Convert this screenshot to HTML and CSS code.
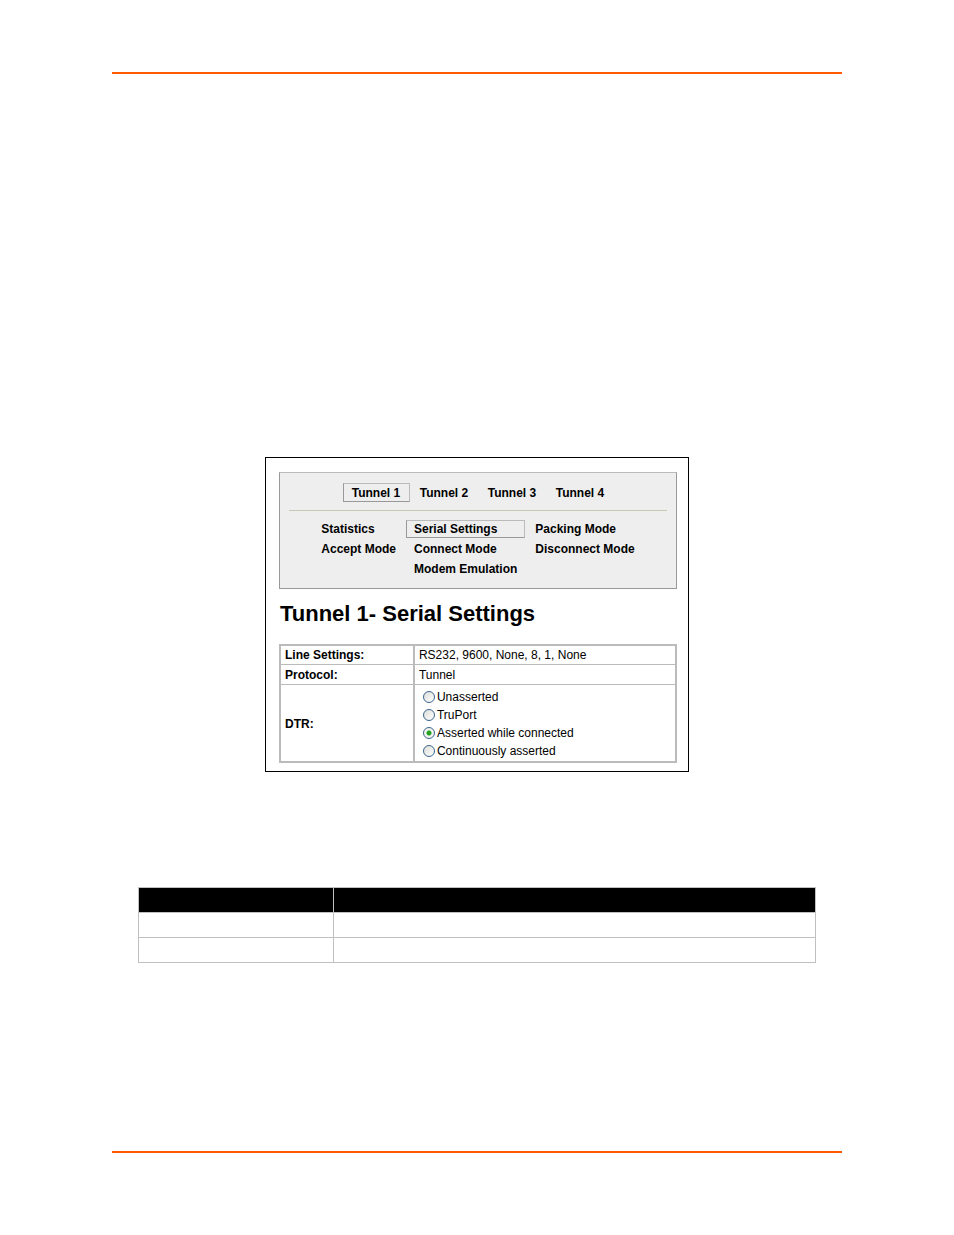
FILE: index.html
```html
<!DOCTYPE html>
<html lang="en">
<head>
<meta charset="utf-8">
<title>Tunnel 1 - Serial Settings</title>
<link rel="stylesheet" href="styles.css">
</head>
<body>
<div class="page">
  <main class="content">
    <section class="figure">
      <nav class="panel">
        <div class="tabs">
          <a class="item selected" href="#t1">Tunnel 1</a>
          <a class="item" href="#t2">Tunnel 2</a>
          <a class="item" href="#t3">Tunnel 3</a>
          <a class="item" href="#t4">Tunnel 4</a>
        </div>
        <div class="sections">
          <a class="item" href="#statistics">Statistics</a>
          <a class="item selected" href="#serial">Serial Settings</a>
          <a class="item" href="#packing">Packing Mode</a>
          <a class="item" href="#accept">Accept Mode</a>
          <a class="item" href="#connect">Connect Mode</a>
          <a class="item" href="#disconnect">Disconnect Mode</a>
          <a class="item middle" href="#modem">Modem Emulation</a>
        </div>
      </nav>
      <h1 class="title">Tunnel 1- Serial Settings</h1>
      <table class="settings">
        <tr><th scope="row">Line Settings:</th><td>RS232, 9600, None, 8, 1, None</td></tr>
        <tr><th scope="row">Protocol:</th><td>Tunnel</td></tr>
        <tr>
          <th scope="row">DTR:</th>
          <td class="choices">
            <label class="choice"><input type="radio" name="dtr">Unasserted</label>
            <label class="choice"><input type="radio" name="dtr">TruPort</label>
            <label class="choice"><input type="radio" name="dtr" checked>Asserted while connected</label>
            <label class="choice"><input type="radio" name="dtr">Continuously asserted</label>
          </td>
        </tr>
      </table>
    </section>
    <table class="summary">
      <thead><tr><th class="key"></th><th></th></tr></thead>
      <tbody>
        <tr><td></td><td></td></tr>
        <tr><td></td><td></td></tr>
      </tbody>
    </table>
  </main>
</div>
</body>
</html>
```
FILE: styles.css
```css
* { box-sizing: border-box; }

body {
  margin: 0;
  background: #fff;
  color: #000;
  font: 12px/16px "Liberation Sans", Arial, sans-serif;
}

.page {
  display: flex;
  min-height: 100vh;
  padding: 72px 112px 82px;
}

.content {
  flex: 1;
  padding: 383px 26px 112px;
  border-top: 2px solid #ff5a00;
  border-bottom: 2px solid #ff5a00;
}

.figure {
  max-width: 424px;
  margin: 0 auto;
  padding: 14px 11px 8px 13px;
  border: 1px solid #000;
}

.panel {
  padding: 10px 9px;
  border: 1px solid;
  border-color: #bbb #999 #999;
  background: #eee;
}

.tabs {
  display: flex;
  justify-content: center;
  gap: 1px;
  padding-bottom: 8px;
  border-bottom: 1px solid #c8c8b4;
}

.sections {
  display: grid;
  grid-template-columns: auto auto auto;
  justify-content: center;
  gap: 2px;
  padding-top: 9px;
}

.item {
  padding: 0 7px;
  border: 1px solid transparent;
  color: #000;
  font-weight: bold;
  text-decoration: none;
}

.tabs .item {
  min-width: 67px;
  padding-top: 1px;
  text-align: center;
}

.selected { border-color: #bbb #bbb #999 #999; }

.middle { grid-column: 2; }

.title {
  margin: 12px 0 18px;
  padding-left: 1px;
  font-size: 22px;
  line-height: 25px;
}

.settings {
  width: 100%;
  border: 2px solid #bbb;
  border-spacing: 0;
}

.settings th,
.settings td {
  padding: 2px 4px 1px;
  border-bottom: 1px solid #bbb;
  text-align: left;
}

.settings th {
  width: 34%;
  border-right: 2px solid #bbb;
}

.settings tr:first-child > * { padding-top: 1px; }

.settings tr:last-child > * { border-bottom: 0; }

.settings .choices { padding: 3px 8px 1px; }

.choice {
  display: flex;
  align-items: center;
  gap: 2px;
  line-height: 18px;
}

.choice input {
  appearance: none;
  width: 12px;
  height: 12px;
  margin: 0;
  border: 1px solid #3b668f;
  border-radius: 50%;
  background: linear-gradient(135deg, #dcdcd7, #fff);
}

.choice input:checked {
  background: radial-gradient(circle, #21a121 0 2px, #f2f2ef 3px);
}

.summary {
  width: 100%;
  margin-top: 115px;
  border-collapse: collapse;
  table-layout: fixed;
}

.summary th,
.summary td {
  height: 25px;
  padding: 0;
  border: 1px solid #c0c0c0;
}

.summary th { background: #000; }

.summary .key { width: 195px; }
```
